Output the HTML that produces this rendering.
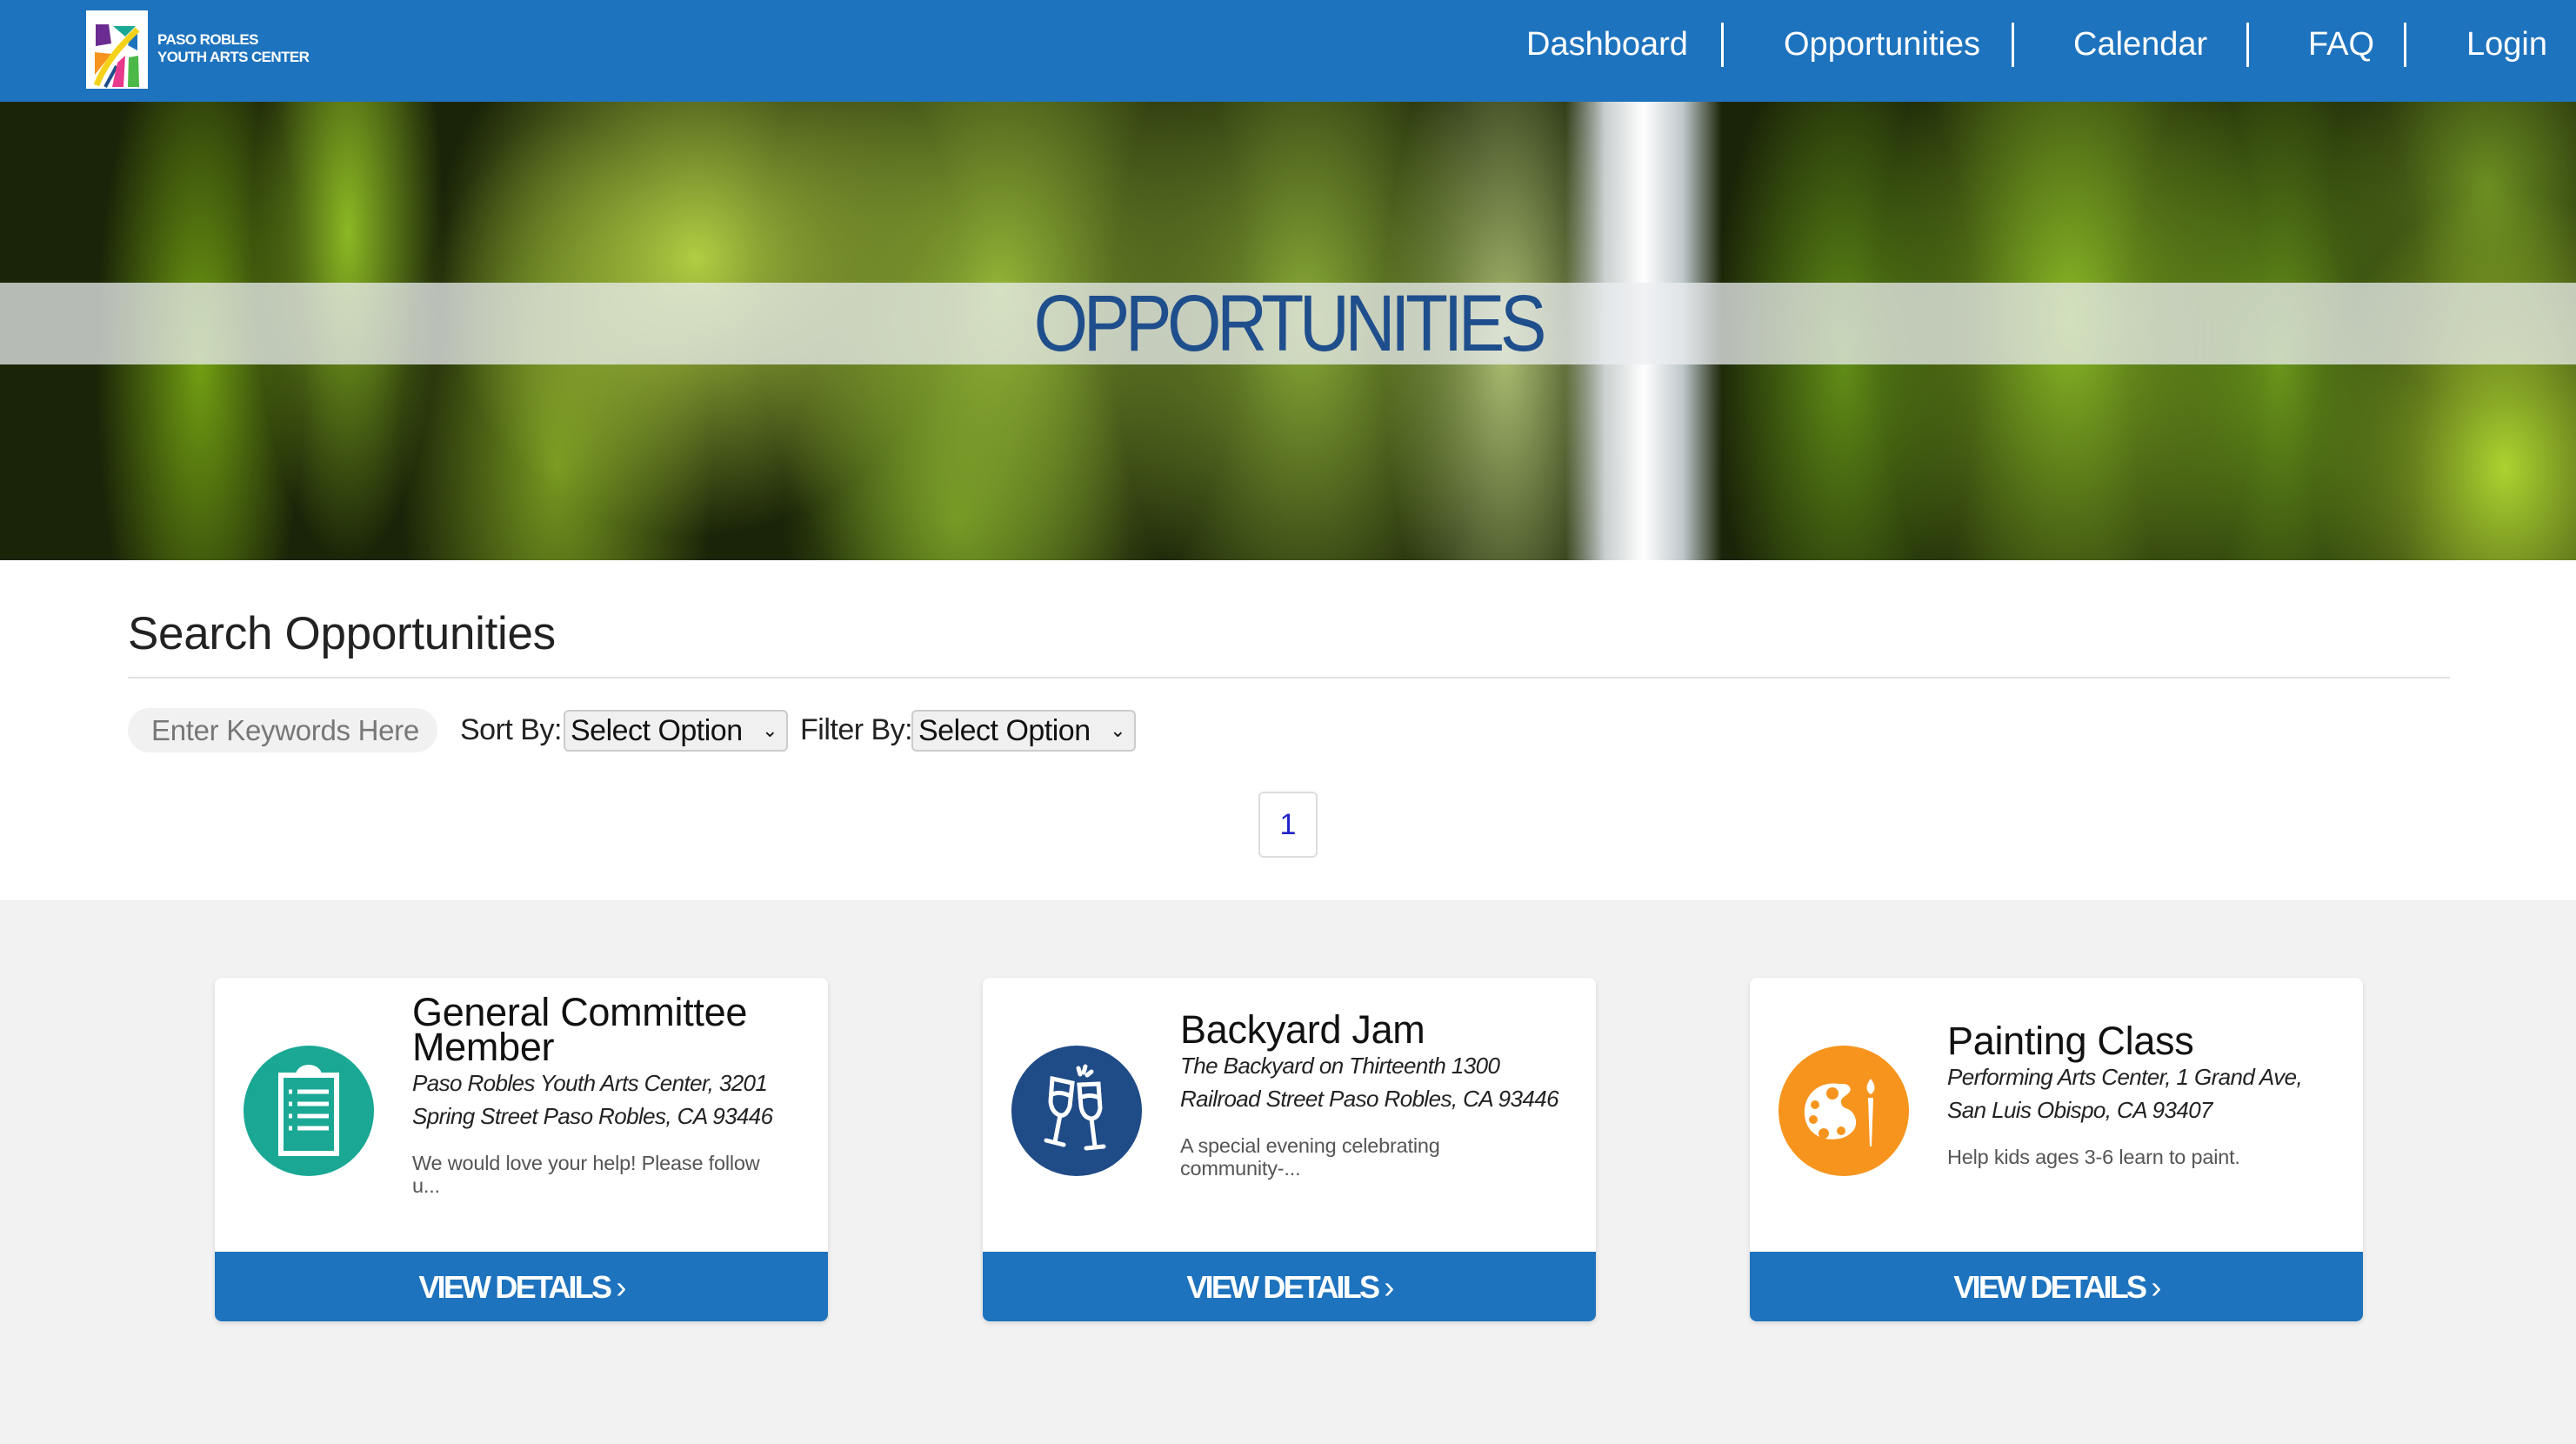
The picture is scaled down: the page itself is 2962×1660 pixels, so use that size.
<!DOCTYPE html>
<html><head><meta charset="utf-8"><style>
*{margin:0;padding:0;box-sizing:border-box}
body{width:2962px;height:1660px;overflow:hidden;font-family:"Liberation Sans",sans-serif;background:#f2f2f2;position:relative}
.nav{position:absolute;left:0;top:0;width:2962px;height:117px;background:#1e73be}
.logo{position:absolute;left:99px;top:12px;width:71px;height:90px;background:#fff}
.logotext{position:absolute;left:181px;top:36px;color:#fff;font-size:17px;font-weight:bold;line-height:20px;letter-spacing:-0.6px}
.ni{position:absolute;top:28px;color:#fff;font-size:38px;line-height:46px;letter-spacing:0px}
.sep{position:absolute;top:26px;width:3px;height:51px;background:#fff}
.hero{position:absolute;left:0;top:117px;width:2962px;height:527px;overflow:hidden;background:#1a2408}
.hero div{position:absolute}
.band{position:absolute;left:0;top:325px;width:2962px;height:94px;background:rgba(235,238,240,.75)}
.htitle{position:absolute;left:0;top:325px;width:2962px;text-align:center;font-size:92px;line-height:94px;color:#1f4e8c;letter-spacing:-6px;transform:scaleX(.87)}
.white{position:absolute;left:0;top:644px;width:2962px;height:391px;background:#fff}
.stitle{position:absolute;left:147px;top:698px;font-size:53px;color:#222;letter-spacing:-0.3px}
.hr{position:absolute;left:147px;top:778px;width:2670px;height:2px;background:#e2e2e2}
.inp{position:absolute;left:147px;top:814px;width:356px;height:51px;border-radius:25px;background:#f1f1f1;color:#777;font-size:33px;line-height:51px;padding-left:27px;letter-spacing:-0.3px}
.lbl{position:absolute;top:814px;font-size:34px;line-height:51px;color:#222;letter-spacing:-0.5px}
.sel{position:absolute;top:816px;height:48px;border:2px solid #ccc;border-radius:6px;background:#f0f0f0;font-size:34px;line-height:44px;padding-left:6px;color:#111;letter-spacing:-0.5px}
.sel span{position:absolute;right:10px;top:0;font-size:22px}
.pg{position:absolute;left:1447px;top:910px;width:68px;height:76px;border:2px solid #ddd;border-radius:6px;background:#fff;color:#2222cc;text-align:center;font-size:34px;line-height:72px}
.card{position:absolute;top:1124px;width:705px;height:395px;background:#fff;border-radius:8px;box-shadow:0 2px 6px rgba(0,0,0,.12);overflow:hidden}
.circ{position:absolute;left:33px;top:78px;width:150px;height:150px;border-radius:50%}
.body{position:absolute;left:227px;top:0;width:470px;height:272px;display:flex;flex-direction:column;justify-content:center}
.t{font-size:45px;line-height:40px;color:#111;letter-spacing:-0.3px}
.a{font-size:26px;line-height:38px;font-style:italic;color:#222;margin-top:2px;letter-spacing:-0.6px;white-space:nowrap}
.d{font-size:23.5px;line-height:26px;color:#555;margin-top:22px;letter-spacing:-0.2px;white-space:nowrap}
.btn{position:absolute;left:0;bottom:0;width:100%;height:80px;background:#1e73be;color:#fff;text-align:center;font-size:36px;line-height:82px;letter-spacing:-2.8px;font-weight:bold}
</style></head><body>
<div class="nav">
 <div class="logo"><svg width="71" height="90" viewBox="0 0 71 90">
  <polygon points="11,16 26,16 29,38 11,41" fill="#6a2c91"/>
  <polygon points="31,18 57,18 45,30" fill="#1aa894"/>
  <polygon points="52,28 59,24 59,46 48,40" fill="#1e73be"/>
  <polygon points="10,48 29,50 10,74" fill="#f7941d"/>
  <path d="M59,22 C40,40 22,60 12,86" stroke="#f5d21a" stroke-width="7" fill="none"/>
  <path d="M35,64 L22,88" stroke="#1f4e8c" stroke-width="4"/>
  <polygon points="36,60 45,52 43,88 30,88" fill="#e83a8c"/>
  <polygon points="49,54 60,52 61,88 48,88" fill="#4cb848"/>
 </svg></div>
 <div class="logotext">PASO ROBLES<br>YOUTH ARTS CENTER</div>
 <div class="ni" style="left:1755px">Dashboard</div><div class="sep" style="left:1979px"></div>
 <div class="ni" style="left:2051px">Opportunities</div><div class="sep" style="left:2313px"></div>
 <div class="ni" style="left:2384px">Calendar</div><div class="sep" style="left:2583px"></div>
 <div class="ni" style="left:2654px">FAQ</div><div class="sep" style="left:2764px"></div>
 <div class="ni" style="left:2836px">Login</div>
</div>
<div class="hero">
 <div style="left:0;top:0;width:2962px;height:527px;background:
 radial-gradient(ellipse 120px 420px at 230px 300px,rgba(130,180,20,.85),transparent),
 radial-gradient(ellipse 110px 380px at 400px 150px,rgba(160,210,40,.85),transparent),
 radial-gradient(ellipse 300px 320px at 800px 180px,rgba(185,215,70,.95),transparent),
 radial-gradient(ellipse 180px 400px at 640px 420px,rgba(150,190,40,.75),transparent),
 radial-gradient(ellipse 280px 440px at 1150px 220px,rgba(160,195,60,.9),transparent),
 radial-gradient(ellipse 200px 300px at 1100px 480px,rgba(110,150,30,.85),transparent),
 radial-gradient(ellipse 220px 420px at 1500px 250px,rgba(150,185,60,.9),transparent),
 radial-gradient(ellipse 140px 420px at 1730px 280px,rgba(180,200,120,.95),transparent),
 radial-gradient(ellipse 150px 400px at 2120px 300px,rgba(110,160,25,.85),transparent),
 radial-gradient(ellipse 220px 460px at 2380px 250px,rgba(150,200,40,.9),transparent),
 radial-gradient(ellipse 170px 420px at 2620px 300px,rgba(120,170,30,.85),transparent),
 radial-gradient(ellipse 220px 320px at 2880px 420px,rgba(180,220,50,.95),transparent),
 radial-gradient(ellipse 180px 250px at 2860px 100px,rgba(130,170,40,.8),transparent);"></div>
 <div style="left:1800px;top:0;width:180px;height:527px;background:linear-gradient(90deg,transparent,rgba(230,235,240,.85) 25%,#fff 50%,rgba(220,228,238,.85) 75%,transparent)"></div>
</div>
<div class="band"></div>
<div class="htitle">OPPORTUNITIES</div>
<div class="white"></div>
<div class="stitle">Search Opportunities</div>
<div class="hr"></div>
<div class="inp">Enter Keywords Here</div>
<div class="lbl" style="left:529px">Sort By:</div>
<div class="sel" style="left:648px;width:258px">Select Option<span>&#8964;</span></div>
<div class="lbl" style="left:920px">Filter By:</div>
<div class="sel" style="left:1048px;width:258px">Select Option<span>&#8964;</span></div>
<div class="pg">1</div>

<div class="card" style="left:247px">
 <div class="circ" style="background:#1aa894"><svg width="150" height="150" viewBox="0 0 150 150">
  <rect x="43" y="34" width="64" height="90" fill="none" stroke="#fff" stroke-width="6"/>
  <path d="M60,34 a15,12 0 0 1 30,0 z" fill="#fff"/>
  <g stroke="#fff" stroke-width="5"><path d="M52,53h4M62,53h36M52,67h4M62,67h36M52,81h4M62,81h36M52,95h4M62,95h36"/></g>
 </svg></div>
 <div class="body"><div class="t">General Committee<br>Member</div><div class="a">Paso Robles Youth Arts Center, 3201<br>Spring Street Paso Robles, CA 93446</div><div class="d">We would love your help! Please follow<br>u...</div></div>
 <div class="btn">VIEW DETAILS <span style="font-weight:normal">›</span></div>
</div>

<div class="card" style="left:1130px">
 <div class="circ" style="background:#1f4b87"><svg width="150" height="150" viewBox="0 0 150 150" fill="none" stroke="#fff" stroke-width="5" stroke-linecap="round">
  <path d="M47,38 L70,43 L67,70 Q63,82 55,80 Q46,76 45,64 Z"/><path d="M47,56 Q56,52 68,58"/>
  <path d="M56,80 L50,111 M40,109 L60,114"/>
  <path d="M78,45 L100,44 L102,72 Q100,84 91,84 Q82,82 80,70 Z"/><path d="M79,60 Q90,55 101,60"/>
  <path d="M92,84 L96,116 M86,118 L106,116"/>
  <path d="M77,26 L79,33 M85,24 L83,31 M92,30 L87,34"/>
 </svg></div>
 <div class="body"><div class="t">Backyard Jam</div><div class="a">The Backyard on Thirteenth 1300<br>Railroad Street Paso Robles, CA 93446</div><div class="d">A special evening celebrating<br>community-...</div></div>
 <div class="btn">VIEW DETAILS <span style="font-weight:normal">›</span></div>
</div>

<div class="card" style="left:2012px">
 <div class="circ" style="background:#f7941d"><svg width="150" height="150" viewBox="0 0 150 150">
  <path d="M70,44 C45,40 28,58 30,80 C32,102 52,112 74,106 C90,100 92,88 86,78 C80,70 74,74 72,66 C70,58 86,56 82,48 C80,44 76,44 70,44 Z" fill="#fff"/>
  <g fill="#f7941d"><circle cx="62" cy="55" r="7"/><circle cx="42" cy="68" r="5"/><circle cx="40" cy="85" r="5"/><circle cx="52" cy="101" r="6"/><circle cx="72" cy="98" r="5"/></g>
  <path d="M106,38 C100,46 100,52 106,56 C112,52 112,46 106,38 Z" fill="#fff"/>
  <path d="M103,60 L109,60 L107,116 L105,116 Z" fill="#fff"/>
 </svg></div>
 <div class="body"><div class="t">Painting Class</div><div class="a">Performing Arts Center, 1 Grand Ave,<br>San Luis Obispo, CA 93407</div><div class="d">Help kids ages 3-6 learn to paint.</div></div>
 <div class="btn">VIEW DETAILS <span style="font-weight:normal">›</span></div>
</div>
</body></html>
